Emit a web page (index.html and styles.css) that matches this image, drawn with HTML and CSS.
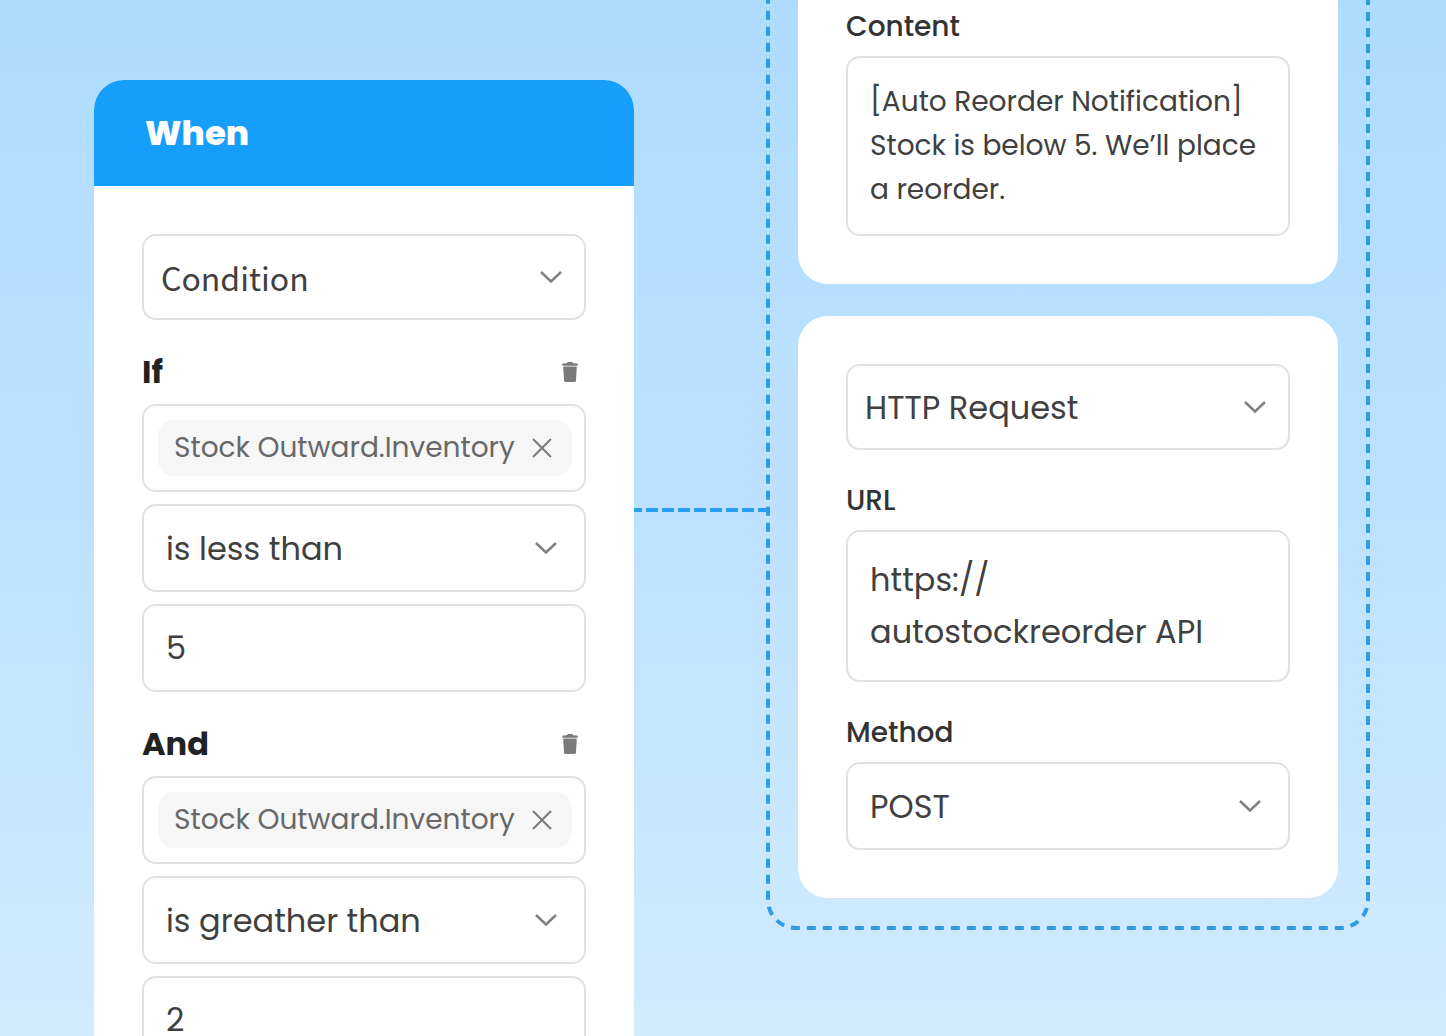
FILE: index.html
```html
<!DOCTYPE html>
<html lang="en">
<head>
  <meta charset="utf-8">
  <meta name="viewport" content="width=device-width, initial-scale=1">
  <title>Auto reorder workflow</title>
  <link rel="stylesheet" href="styles.css">
</head>
<body>
  <svg class="sprite" aria-hidden="true">
    <symbol id="chevron" viewBox="0 0 24 14"><path d="M2 2l10 9.500L22 2" fill="none" stroke="currentColor" stroke-width="2.500"/></symbol>
    <symbol id="cross" viewBox="0 0 20 20"><path d="M1 1l18 18M19 1L1 19" fill="none" stroke="currentColor" stroke-width="2"/></symbol>
    <symbol id="trash" viewBox="0 0 16 20"><path d="M0.300 3.800V2.400Q0.300 1.600 1.200 1.500L4.800 1.200Q5.400 0 6.400 0H9.600Q10.600 0 11.200 1.200L14.800 1.500Q15.700 1.600 15.700 2.400V3.800Z" fill="currentColor"/><path d="M1.200 4.600H14.800L14 18.400Q13.900 20 12.500 20H3.500Q2.100 20 2 18.400Z" fill="currentColor"/></symbol>
  </svg>

  <main class="flow">
    <section class="card trigger">
      <h1 class="trigger-title">When</h1>
      <div class="card-body">
        <div class="select select-main select-condition">
          <select aria-label="Trigger type"><option>Condition</option></select>
          <svg><use href="#chevron"/></svg>
        </div>

        <div class="rule-head">
          <h2>If</h2>
          <button type="button" class="icon-button" aria-label="Delete If rule"><svg class="trash"><use href="#trash"/></svg></button>
        </div>
        <div class="rule">
          <div class="tag-box">
            <span class="tag">Stock Outward.Inventory
              <button type="button" class="icon-button" aria-label="Remove field"><svg class="cross"><use href="#cross"/></svg></button>
            </span>
          </div>
          <div class="select">
            <select aria-label="If operator"><option>is less than</option></select>
            <svg><use href="#chevron"/></svg>
          </div>
          <input class="field" type="text" value="5" aria-label="If value">
        </div>

        <div class="rule-head">
          <h2>And</h2>
          <button type="button" class="icon-button" aria-label="Delete And rule"><svg class="trash"><use href="#trash"/></svg></button>
        </div>
        <div class="rule">
          <div class="tag-box">
            <span class="tag">Stock Outward.Inventory
              <button type="button" class="icon-button" aria-label="Remove field"><svg class="cross"><use href="#cross"/></svg></button>
            </span>
          </div>
          <div class="select">
            <select aria-label="And operator"><option>is greather than</option></select>
            <svg><use href="#chevron"/></svg>
          </div>
          <input class="field" type="text" value="2" aria-label="And value">
        </div>
      </div>
    </section>

    <svg class="connector" aria-hidden="true"><line x1="0" y1="2" x2="100%" y2="2"/></svg>

    <section class="actions">
      <svg class="outline" aria-hidden="true"><rect x="2" y="2" rx="28"/></svg>
      <div class="card card-continued">
        <div class="card-body">
          <label for="content">Content</label>
          <textarea id="content" class="message" rows="3">[Auto Reorder Notification]
Stock is below 5. We’ll place
a reorder.</textarea>
        </div>
      </div>
      <div class="card">
        <div class="card-body">
          <div class="select select-main">
            <select aria-label="Action type"><option>HTTP Request</option></select>
            <svg><use href="#chevron"/></svg>
          </div>
          <label for="url">URL</label>
          <textarea id="url" rows="2">https://
autostockreorder API</textarea>
          <label for="method">Method</label>
          <div class="select">
            <select id="method"><option>POST</option></select>
            <svg><use href="#chevron"/></svg>
          </div>
        </div>
      </div>
    </section>
  </main>
</body>
</html>
```
FILE: styles.css
```css
* { box-sizing: border-box; }

body {
  margin: 0;
  height: 100vh;
  overflow: hidden;
  background: linear-gradient(#aedcff, #bde2ff 50%, #d1ebfe);
  color: #404040;
  font-family: Poppins, Inter, "Liberation Sans", sans-serif;
  font-size: 32px;
  font-weight: 400;
}

.sprite { display: none; }

.flow {
  display: grid;
  grid-template-columns: 540fr 132px 604fr;
  align-items: start;
  padding: 0 76px 0 94px;
}

.card {
  overflow: hidden;
  border-radius: 30px;
  background: #fff;
}

.card-body { padding: 48px; }

.trigger { margin-top: 80px; }

.trigger-title {
  margin: 0;
  padding: 28px 51px;
  background: #169efc;
  color: #fff;
  font-size: 34px;
  font-weight: 800;
  line-height: 50px;
}

.rule-head {
  display: flex;
  align-items: center;
  justify-content: space-between;
  padding: 32px 8px 12px 0;
}

.rule-head h2 {
  margin: 0;
  color: #222;
  font-size: 32px;
  font-weight: 700;
  line-height: 40px;
}

.rule {
  display: grid;
  gap: 12px;
}

label {
  display: block;
  padding: 31px 0 9px;
  color: #333;
  font-size: 28px;
  font-weight: 500;
  line-height: 40px;
}

select,
textarea,
.field,
.tag-box {
  display: block;
  width: 100%;
  margin: 0;
  border: 2px solid #e1e1e1;
  border-radius: 14px;
  background: #fff;
  color: inherit;
  font: inherit;
}

select,
.field {
  height: 88px;
  padding: 0 22px;
  appearance: none;
}

textarea {
  padding: 22px;
  line-height: 52px;
  resize: none;
  overflow: hidden;
}

.message {
  font-size: 28px;
  line-height: 44px;
}

.select {
  display: grid;
  align-items: center;
}

.select > * { grid-area: 1 / 1; }

.select svg {
  justify-self: end;
  width: 24px;
  height: 14px;
  margin-right: 28px;
  color: #808080;
  pointer-events: none;
}

.select-main select {
  height: 86px;
  padding: 0 17px;
}

.select-main svg { margin-right: 23px; }

.select-condition select {
  font-family: "Noto Sans CJK SC", "Noto Sans", sans-serif;
}

.tag-box { padding: 14px 12px 14px 14px; }

.tag {
  display: flex;
  align-items: center;
  justify-content: space-between;
  height: 56px;
  padding: 0 20px 0 16px;
  border-radius: 16px;
  background: #f6f6f6;
  color: #686868;
  font-size: 28px;
}

.icon-button {
  display: flex;
  padding: 0;
  border: 0;
  background: none;
  color: #7a7a7a;
}

.trash {
  width: 16px;
  height: 20px;
}

.cross {
  width: 20px;
  height: 20px;
}

.connector {
  width: 100%;
  height: 4px;
  margin-top: 508px;
}

.connector line {
  stroke: #2aa0f0;
  stroke-width: 4px;
  stroke-dasharray: 12 4;
  stroke-dashoffset: 4px;
}

.actions {
  position: relative;
  display: grid;
  gap: 32px;
  padding: 0 32px 32px;
}

/* Dashed frame round the action cards; it runs on past the top edge. */
.outline {
  position: absolute;
  top: -60px;
  left: 0;
  width: 100%;
  height: calc(100% + 60px);
}

.outline rect {
  width: calc(100% - 4px);
  height: calc(100% - 4px);
  fill: none;
  stroke: #2e9de6;
  stroke-width: 4px;
  stroke-dasharray: 9 7;
  stroke-dashoffset: 10px;
}

.card-continued { border-radius: 0 0 30px 30px; }

.card-continued .card-body { padding-top: 0; }

.card-continued label { padding-top: 7px; }
```
